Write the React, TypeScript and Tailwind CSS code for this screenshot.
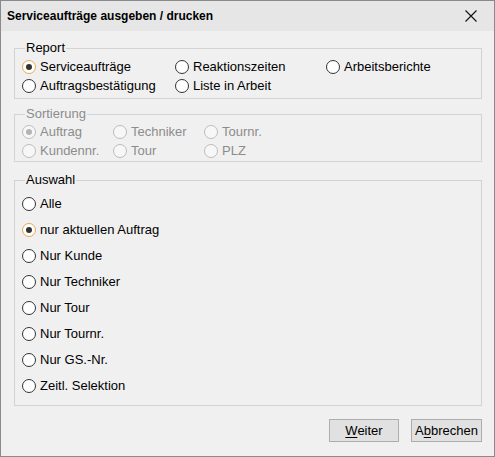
import React, { useState } from 'react'

type RadioProps = {
    label: React.ReactNode
    checked?: boolean
    disabled?: boolean
    onClick?: () => void
}

const Radio = ({ label, checked, disabled, onClick }: RadioProps) => {
    let ring = "border-[#333333] bg-white"
    if (disabled) ring = "border-[#bcbcbc] bg-[#f7f7f7]"
    else if (checked) ring = "border-[#eaa84a] bg-white"
    return (
        <div className="flex items-center cursor-default" onClick={disabled ? undefined : onClick}>
            <span className={"flex items-center justify-center w-[14px] h-[14px] rounded-full border shrink-0 " + ring}>
                {checked && (
                    <span className={"w-[6px] h-[6px] rounded-full " + (disabled ? "bg-[#b4b4b4]" : "bg-[#333333]")}></span>
                )}
            </span>
            <span className={"ml-[4px] whitespace-nowrap " + (disabled ? "text-[#8c8c8c]" : "text-black")}>{label}</span>
        </div>
    )
}

const Group = ({ title, disabled, children, className }: { title: string, disabled?: boolean, children: React.ReactNode, className?: string }) => (
    <fieldset className={"mx-[13px] mr-[12px] border border-[#d3d3d3] " + (className || "")}>
        <legend className={"ml-[10px] px-[1px] leading-[16px] " + (disabled ? "text-[#8c8c8c]" : "text-black")}>{title}</legend>
        {children}
    </fieldset>
)

const App = () => {
    const [report, setreport] = useState("Serviceaufträge")
    const [auswahl, setauswahl] = useState("nur aktuellen Auftrag")

    const auswahlItems = ["Alle", "nur aktuellen Auftrag", "Nur Kunde", "Nur Techniker", "Nur Tour", "Nur Tournr.", "Nur GS.-Nr.", "Zeitl. Selektion"]

    return (
        <div className="w-[495px] h-[457px] bg-[#f0f0f0] border border-[#8a8a8a] flex flex-col text-[13px] select-none"
            style={{ fontFamily: '"Liberation Sans", Arial, sans-serif' }}>
            {/* title bar */}
            <div className="h-[30px] bg-[#e6e6e6] flex items-center justify-between pl-[6px] pr-[17px] shrink-0">
                <span className="font-bold text-[12px] text-black">Serviceaufträge ausgeben / drucken</span>
                <svg width="12" height="12" viewBox="0 0 12 12">
                    <path d="M0.5 0.5 L11.5 11.5 M11.5 0.5 L0.5 11.5" stroke="#111" strokeWidth="1.1" fill="none" />
                </svg>
            </div>

            <Group title="Report" className="mt-[9px] pt-[1px] pb-[3px]">
                <div className="flex h-[19px] pl-[7px]">
                    <div className="w-[153px]"><Radio label="Serviceaufträge" checked={report === "Serviceaufträge"} onClick={() => setreport("Serviceaufträge")} /></div>
                    <div className="w-[151px]"><Radio label="Reaktionszeiten" checked={report === "Reaktionszeiten"} onClick={() => setreport("Reaktionszeiten")} /></div>
                    <Radio label="Arbeitsberichte" checked={report === "Arbeitsberichte"} onClick={() => setreport("Arbeitsberichte")} />
                </div>
                <div className="flex h-[19px] pl-[7px]">
                    <div className="w-[153px]"><Radio label="Auftragsbestätigung" checked={report === "Auftragsbestätigung"} onClick={() => setreport("Auftragsbestätigung")} /></div>
                    <Radio label="Liste in Arbeit" checked={report === "Liste in Arbeit"} onClick={() => setreport("Liste in Arbeit")} />
                </div>
            </Group>

            <Group title="Sortierung" disabled className="mt-[7px] pb-[1px]">
                <div className="flex h-[19px] pl-[7px]">
                    <div className="w-[91px]"><Radio label="Auftrag" checked disabled /></div>
                    <div className="w-[91px]"><Radio label="Techniker" disabled /></div>
                    <Radio label="Tournr." disabled />
                </div>
                <div className="flex h-[19px] pl-[7px]">
                    <div className="w-[91px]"><Radio label="Kundennr." disabled /></div>
                    <div className="w-[91px]"><Radio label="Tour" disabled /></div>
                    <Radio label="PLZ" disabled />
                </div>
            </Group>

            <Group title="Auswahl" className="mt-[10px] pt-[3px] pb-[6px]">
                {auswahlItems.map((item) => (
                    <div key={item} className="h-[26px] flex items-center pl-[7px]">
                        <Radio label={item} checked={auswahl === item} onClick={() => setauswahl(item)} />
                    </div>
                ))}
            </Group>

            <div className="flex justify-end gap-[12px] mt-[13px] mr-[12px]">
                <button className="w-[70px] h-[23px] bg-[#e1e1e1] border border-[#adadad] text-black leading-none">
                    <span className="underline underline-offset-2">W</span>eiter
                </button>
                <button className="w-[71px] h-[23px] bg-[#e1e1e1] border border-[#adadad] text-black leading-none">
                    A<span className="underline underline-offset-2">b</span>brechen
                </button>
            </div>
        </div>
    )
}

export default App
